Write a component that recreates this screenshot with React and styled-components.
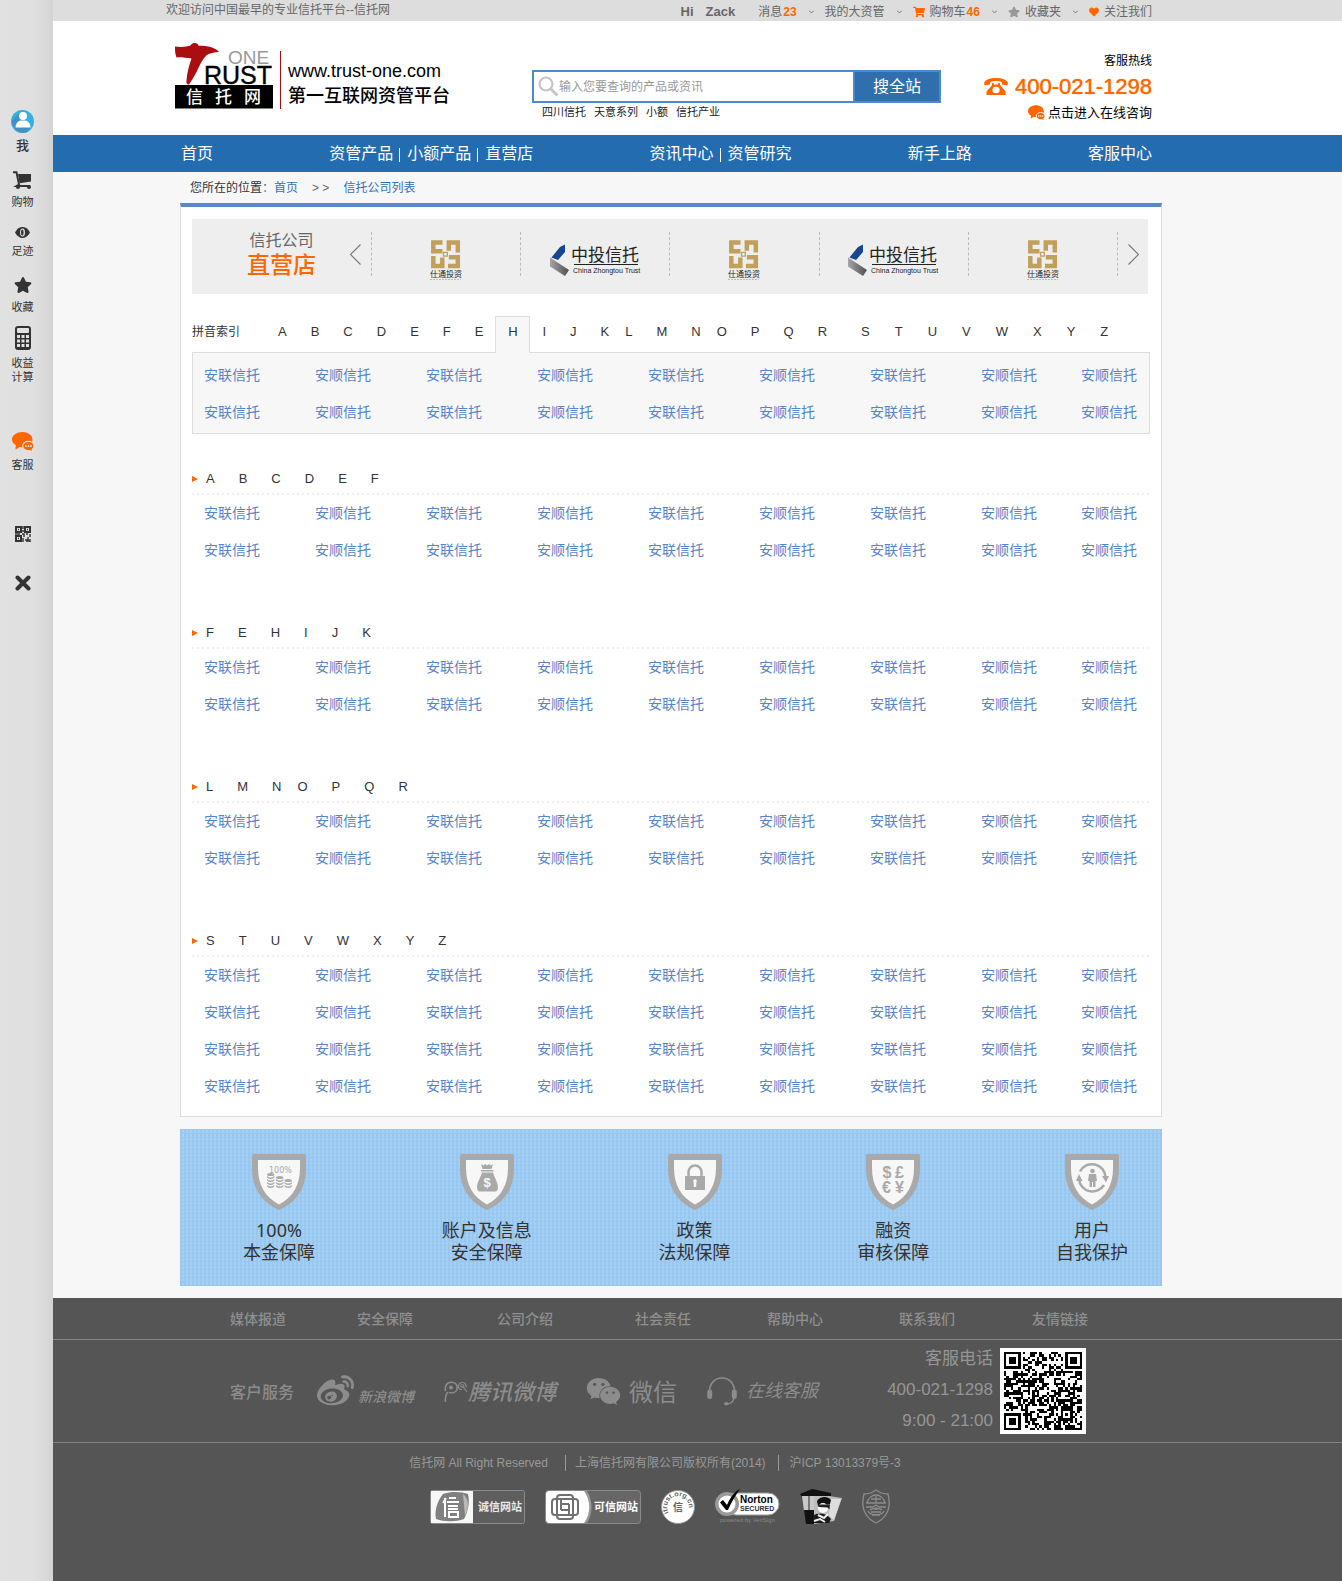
import React from "react";
import styled, { createGlobalStyle, css } from "styled-components";
import { FaShoppingCart, FaStar, FaHeart, FaWeibo, FaWeixin } from "react-icons/fa";

const SANS = `"Liberation Sans", "Noto Sans CJK SC", sans-serif`;
const ORANGE = "#ff6600";
const LINK = "#5584c8";

const GlobalStyle = createGlobalStyle`
  *, *::before, *::after { box-sizing: border-box; }
  body { margin: 0; background: #f7f7f7; color: #333; font: 12px/16px ${SANS}; }
  a { color: inherit; text-decoration: none; }
  ul, p, h1, h2 { margin: 0; padding: 0; list-style: none; font: inherit; }
  button, input { font: inherit; padding: 0; margin: 0; border: 0; background: none; color: inherit; }
  button { cursor: pointer; }
  svg { display: block; flex: none; }
`;

/* ---------- page frame ---------- */

const Shell = styled.div`
  display: flex;
  min-height: 100vh;
`;

const Main = styled.div`
  flex: 1;
  min-width: 0;
  display: flex;
  flex-direction: column;
`;

const Band = styled.div`
  padding-right: 53px;
  background: ${(p) => p.$bg || "transparent"};
`;

const Inner = styled.div`
  max-width: ${(p) => (p.$wide ? "1012px" : "982px")};
  margin: 0 auto;
`;

/* ---------- side bar ---------- */

const Side = styled.aside`
  flex: 0 0 53px;
  display: flex;
  flex-direction: column;
  align-items: center;
  padding: 110px 8px 0 0;
  background: linear-gradient(90deg, #e1e1e1 0, #e0e0e0 30px, #d9d9d9 46px, #d3d3d3 53px);
`;

const SideItem = styled.a`
  display: flex;
  flex-direction: column;
  align-items: center;
  gap: 6px;
  margin-top: ${(p) => p.$space}px;
  color: #333;
  font-size: ${(p) => (p.$strong ? 13 : 11)}px;
  font-weight: ${(p) => (p.$strong ? 500 : 400)};
  line-height: 14px;
  text-align: center;
`;

const SideButton = styled.button`
  margin-top: 33px;
`;

const SideLabel = styled.span`
  width: 24px;
`;

/* ---------- top bar ---------- */

const TopRow = styled(Inner)`
  display: flex;
  justify-content: space-between;
  align-items: center;
  height: 21px;
  padding-right: 25px;
  color: #666;
  white-space: nowrap;
`;

const Welcome = styled.span`
  padding: 0 0 2px 1px;
`;

const TopMenu = styled.nav`
  display: flex;
  align-items: center;
  gap: 11px;
  padding-top: 3px;
`;

const Greeting = styled.span`
  display: flex;
  gap: 12px;
  margin-right: 12px;
  font-size: 13px;
  font-weight: 700;
`;

const TopLink = styled.a`
  display: flex;
  align-items: center;
  gap: 5px;
  margin-right: 1px;
  &:last-child { margin-right: 0; }
  b { color: ${ORANGE}; margin-left: -4px; }
`;

/* ---------- header ---------- */

const HeaderRow = styled(Inner)`
  display: flex;
  align-items: flex-start;
  min-height: 114px;
  padding: 0 25px 0 10px;
`;

const Brand = styled.a`
  display: flex;
  flex: 0 0 275px;
  margin-top: 22px;
  color: #000;
  white-space: nowrap;
`;

const BrandText = styled.div`
  margin: 8px 0 0 7px;
  padding: 8px 0 0 7px;
  border-left: 1px solid #a30f10;
  font-size: 18px;
  line-height: 25px;
  strong { display: block; font-weight: 500; }
`;

const Search = styled.form`
  flex: 0 1 409px;
  margin: 49px 0 0 82px;
`;

const SearchBox = styled.div`
  display: flex;
  height: 33px;
  border: 2px solid #4b8bcb;
  background: #fff;
`;

const SearchField = styled.label`
  display: flex;
  flex: 1;
  align-items: center;
  padding-left: 4px;
`;

const SearchInput = styled.input`
  flex: 1;
  min-width: 0;
  height: 29px;
  font-size: 12px;
  outline: 0;
  &::placeholder { color: #999; opacity: 1; }
`;

const SearchButton = styled.button`
  width: 86px;
  border-left: 2px solid #4b8bcb;
  background: #306fae;
  color: #fff;
  font-size: 16px;
`;

const HotWords = styled.div`
  display: flex;
  gap: 8px;
  padding: 2px 0 0 10px;
  font-size: 11px;
  line-height: 14px;
  color: #222;
`;

const Contact = styled.div`
  display: flex;
  flex-direction: column;
  align-items: flex-end;
  gap: 4px;
  margin: 32px 0 0 auto;
  color: #000;
  white-space: nowrap;
`;

const Hotline = styled.a`
  display: flex;
  align-items: center;
  gap: 7px;
  color: ${ORANGE};
  font-size: 22px;
  line-height: 28px;
  text-shadow: 0 0 1px ${ORANGE};
`;

const ChatLink = styled.a`
  display: flex;
  align-items: center;
  gap: 3px;
  font-size: 13px;
`;

/* ---------- main navigation ---------- */

const NavRow = styled(Inner)`
  display: flex;
  justify-content: space-between;
  align-items: center;
  height: 37px;
  padding: 0 10px 0 1px;
  color: #fff;
  font-size: 16px;
  white-space: nowrap;
`;

const NavGroup = styled.div`
  display: flex;
  align-items: center;
`;

const NavLink = styled.a`
  & + & {
    margin-left: 6px;
  }
  & + &::before {
    content: "";
    display: inline-block;
    width: 1px;
    height: 14px;
    margin-right: 7px;
    background: #fff;
    vertical-align: -3px;
  }
`;

/* ---------- breadcrumb and panel ---------- */

const Crumbs = styled.nav`
  display: flex;
  gap: 14px;
  align-items: center;
  height: 31px;
  padding: 1px 0 0 10px;
  a { color: #2f74b5; }
`;

const CrumbMark = styled.span`
  color: #666;
`;

const Panel = styled.main`
  padding: 12px 11px 11px;
  border: 1px solid #ddd;
  border-top: 4px solid #5b87c9;
  background: #fff;
`;

const Carousel = styled.section`
  display: grid;
  grid-template-columns: 179px repeat(5, minmax(0, 1fr)) 31px;
  grid-template-rows: 44px;
  height: 75px;
  margin-right: 2px;
  padding: 13px 0 18px;
  background: #eee;
`;

const CarouselLead = styled.div`
  display: flex;
  justify-content: flex-end;
  align-items: center;
  gap: 34px;
  padding-right: 10px;
`;

const CarouselTitle = styled.h1`
  text-align: center;
  color: #666;
  font-size: 16px;
  line-height: 22px;
  strong {
    display: block;
    color: ${ORANGE};
    font-size: 23px;
    font-weight: 500;
    line-height: 26px;
  }
`;

const Slot = styled.a`
  display: flex;
  justify-content: center;
  padding-top: ${(p) => p.$top}px;
  border-left: 1px dashed #bbb;
`;

const NextCell = styled.div`
  display: flex;
  align-items: center;
  padding-left: 10px;
  border-left: 1px dashed #bbb;
`;

const IndexBar = styled.nav`
  display: flex;
  align-items: flex-start;
  margin-top: 22px;
  line-height: 32px;
  white-space: nowrap;
`;

const LetterGroup = styled.div`
  display: flex;
  gap: ${(p) => p.$gap}px;
  margin-left: ${(p) => p.$before}px;
  font-size: 13px;
`;

const ActiveLetter = styled.a`
  width: 35px;
  height: 37px;
  margin: 0 0 -1px 12px;
  border: 1px solid #ddd;
  border-bottom: 0;
  background: #f7f7f7;
  font-size: 13px;
  line-height: 30px;
  text-align: center;
`;

const IndexBox = styled.div`
  padding: 4px 0 2px;
  border: 1px solid #ddd;
  background: #f7f7f7;
`;

const Names = styled.ul`
  display: grid;
  grid-template-columns: repeat(7, minmax(0, 111fr)) minmax(0, 100fr) 56px;
  padding: 0 ${(p) => (p.$boxed ? 12 : 13)}px 0 ${(p) => (p.$boxed ? 11 : 12)}px;
  color: ${LINK};
  font-size: 14px;
  line-height: 37px;
  white-space: nowrap;
`;

const Section = styled.section`
  margin-top: ${(p) => (p.$first ? 29 : 48)}px;
`;

const SectionHead = styled.h2`
  display: flex;
  align-items: center;
  height: 32px;
  background: repeating-linear-gradient(90deg, #f0f0f0 0 2px, transparent 2px 5px) left bottom / 100% 2px no-repeat;
`;

/* ---------- guarantees ---------- */

const Guarantees = styled(Inner)`
  display: flex;
  justify-content: space-between;
  margin-top: 12px;
  margin-bottom: 12px;
  padding: 25px 34px 23px 63px;
  background-color: #a6d0f3;
  background-image: linear-gradient(90deg, #98c7ef 2px, transparent 2px),
    linear-gradient(#98c7ef 1px, transparent 1px);
  background-size: 4px 4px;
`;

const Guarantee = styled.div`
  display: flex;
  flex-direction: column;
  align-items: center;
  gap: 9px;
  font: 18px/22px "Noto Sans", "Noto Sans CJK SC", sans-serif;
  text-align: center;
`;

/* ---------- footer ---------- */

const Footer = styled.footer`
  flex: 1;
  background: #555;
  color: #999;
`;

const FooterBand = styled(Band)`
  border-bottom: 1px solid #848484;
`;

const FooterLinks = styled(Inner)`
  display: grid;
  grid-template-columns: 127fr 140fr 138fr 132fr 132fr 133fr 56px;
  height: 41px;
  padding: 0 74px 0 50px;
  color: #8f8f8f;
  font-size: 14px;
  font-weight: 500;
  line-height: 43px;
  white-space: nowrap;
`;

const ServiceRow = styled(Inner)`
  display: flex;
  align-items: center;
  height: 102px;
  padding: 0 76px 0 50px;
  color: #8c8c8c;
  white-space: nowrap;
`;

const ServiceTitle = styled.span`
  margin-right: 23px;
  padding-top: 4px;
  font-size: 16px;
  font-weight: 500;
`;

const Service = styled.a`
  display: flex;
  align-items: center;
  gap: ${(p) => p.$gap}px;
  margin-right: 30px;
  font-size: ${(p) => p.$size}px;
  line-height: 32px;
  ${(p) => p.$italic && css`font-style: italic;`}
  ${(p) => p.$strong && css`font-weight: 500;`}
`;

const LowText = styled.span`
  padding-top: ${(p) => (p.$low ? 12 : 3)}px;
`;

const ServicePhone = styled.div`
  margin: 0 7px 0 auto;
  padding-bottom: 4px;
  color: #959595;
  font-size: 17px;
  line-height: 31px;
  text-align: right;
`;

const Copyright = styled(Inner)`
  display: flex;
  justify-content: center;
  padding: 12px 32px 0 0;
  white-space: nowrap;
`;

const CopyItem = styled.span`
  & + & {
    margin-left: 17px;
    padding-left: 9px;
    border-left: 1px solid #999;
  }
  & + & + & { margin-left: 12px; padding-left: 11px; }
`;

const Badges = styled(Inner)`
  display: flex;
  justify-content: center;
  align-items: center;
  gap: 20px;
  padding: 17px 22px 0 0;
`;

/* ---------- drawings ---------- */

const Chevron = () => (
  <svg width="5" height="4" viewBox="0 0 5 4" fill="none" stroke="#777">
    <path d="M0 .5 2.500 3 5 .5" />
  </svg>
);

const ArrowIcon = ({ right }) => (
  <svg width="11" height="21" viewBox="0 0 11 21" fill="none" stroke="#777" strokeWidth="1.100">
    <path d={right ? "M.5.5 10.500 10.500.5 20.500" : "M10.500.5.5 10.500l10 10"} />
  </svg>
);

const LogoMark = () => (
  <svg width="98" height="66" viewBox="0 0 98 66">
    <path
      d="M0 3.500C6 4.500 12 3.800 15.500 2.500 16.500.5 18.500 0 20 0s3.500.8 3.500 2.800C31 2.600 40 4 44 9c-5 .3-9 1-12.500 3.300C27 16.500 25 22 22 28c-2.500 5-5 9-8 13.500-2 .5-2.800-.7-2.500-4C12 30 14 22 16.500 15.500 11 15 6 14 1.500 14.500 0 11 0 7 0 3.500Z"
      fill="#ab0e10"
    />
    <text x="53" y="21" fontSize="19" fill="#9a9a9a">ONE</text>
    <text x="29" y="41" fontSize="25" fill="#000" stroke="#000" strokeWidth=".4">RUST</text>
    <rect y="42" width="98" height="23.500" fill="#000" />
    <g fontSize="17" fontWeight="500" fill="#fff">
      <text x="11" y="60">信</text>
      <text x="40" y="60">托</text>
      <text x="69" y="60">网</text>
    </g>
  </svg>
);

const SearchIcon = () => (
  <svg width="21" height="21" viewBox="0 0 21 21" fill="none" stroke="#c6c6c6">
    <circle cx="8" cy="8" r="6.500" strokeWidth="2.200" />
    <path d="m13 13 6.500 6.500" strokeWidth="3" />
  </svg>
);

const PhoneIcon = () => (
  <svg width="24" height="18" viewBox="0 0 24 18" fill={ORANGE}>
    <path d="M12 0C6 0 1 2 .3 4.500-.2 6.500.5 7.500 2 7.300l3-.5c1-.3 1.300-1.200 1.200-2.800C9.500 2.800 14.500 2.800 17.800 4c-.1 1.600.2 2.500 1.200 2.800l3 .5c1.500.2 2.200-.8 1.700-2.800C23 2 18 0 12 0Z" />
    <path fillRule="evenodd" d="M8 5h1.800v1.500h4.400V5H16v2l5.500 6.500V17h-19v-3.500L8 7.200Zm4 3.800a3.600 3.200 0 1 0 0 6.400 3.600 3.200 0 0 0 0-6.400Z" />
  </svg>
);

const ChatIcon = ({ width, height, bg }) => (
  <svg width={width} height={height} viewBox="0 0 22 20">
    <path d="M10.500 0C16 0 20.500 3.300 20.500 7.600s-4.400 7.700-10 7.700c-1 0-1.900-.1-2.700-.3L3.400 17.500l.5-4.200C1.500 12 0 10 0 7.600 0 3.300 4.700 0 10.500 0Z" fill={ORANGE} />
    <path d="M16.300 9.300c3.300 0 5.700 2 5.700 4.700 0 1.500-.7 2.800-1.800 3.600l.6 2.400-2.900-1.400c-3.800.7-7.200-1.200-7.200-4.600 0-2.700 2.400-4.700 5.600-4.700Z" fill={ORANGE} stroke={bg} strokeWidth="1.200" />
    <path d="M13 13.300h1.600v1.600H13Zm2.600 0h1.600v1.600h-1.600Zm2.600 0h1.600v1.600h-1.600Z" fill={bg} />
  </svg>
);

const UserIcon = () => (
  <svg width="23" height="23" viewBox="0 0 23 23">
    <circle cx="11.500" cy="11.500" r="11.500" fill="#35aee2" />
    <path d="M8.500 3 1 10.500A11.500 11.500 0 0 0 16 22l3-4Z" fill="#4391c1" />
    <circle cx="12" cy="6" r="4" fill="#fff" />
    <path d="M4.500 17.500c0-4 2.500-6.500 5-7h5c2.500.5 5 3 5 7Z" fill="#fff" />
  </svg>
);

const SideCartIcon = () => (
  <svg width="19" height="18" viewBox="0 0 19 18" fill="none" stroke="#333">
    <path d="M0 1.200h3.500L6 13.500 3.500 15H17" strokeWidth="2" />
    <path d="M5 3h13v7.500L6.500 12.200Z" fill="#333" stroke="none" />
    <circle cx="5" cy="16" r="2" fill="#333" stroke="none" />
    <circle cx="16" cy="16" r="2" fill="#333" stroke="none" />
  </svg>
);

const EyeIcon = () => (
  <svg width="15" height="11" viewBox="0 0 15 11">
    <path d="M0 5.500C4-1.800 11-1.800 15 5.500 11 12.800 4 12.800 0 5.500Z" fill="#333" />
    <ellipse cx="7.500" cy="5.500" rx="2.500" ry="4" fill="#e1e1e1" />
    <ellipse cx="7.300" cy="5.500" rx="1.300" ry="3" fill="#333" />
  </svg>
);

const CalcIcon = () => (
  <svg width="16" height="24" viewBox="0 0 16 24">
    <rect width="16" height="24" rx="3" fill="#333" />
    <rect x="2" y="2" width="12" height="5" rx="1" fill="#e1e1e1" />
    {[9, 13.500, 18].map((y) => [2, 6.500, 11].map((x) => (
      <rect key={`${x}-${y}`} x={x} y={y} width="3" height="3" fill="#e1e1e1" />
    )))}
  </svg>
);

const SmallQrIcon = () => (
  <svg width="16" height="16" viewBox="0 0 16 16" fill="none" stroke="#333" strokeWidth="2">
    <path d="M1 1h5v5H1ZM10 1h5v5h-5ZM1 10h5v5H1Z" />
    <path d="M3 3.500h1M12 3.500h1M3 12.500h1M8 0v3M7 5h2M0 8h5M7 8h2v3M11 8h2M15 8v3M8 12v4M10 14h3v-3M15 13v3M11 15h4" strokeWidth="1.400" />
  </svg>
);

const CloseIcon = () => (
  <svg width="16" height="16" viewBox="0 0 16 16" stroke="#333" strokeWidth="4" strokeLinecap="round">
    <path d="m2.500 2.500 11 11m0-11-11 11" />
  </svg>
);

const GoldLogo = () => (
  <svg width="32" height="40" viewBox="0 0 32 40">
    <g fill="none" stroke="#c1a05c" strokeWidth="4.500">
      <path d="M12.500 2.500H3.300v8.700h9.200" />
      <path d="M27.800 12.500V2.500h-9v8.200" />
      <path d="M18 26h9.800v-8.800h-9" />
      <path d="M3.300 16v10h9v-8.500" />
      <path d="M13.500 12.300h3.800v3.800h-3.800Z" strokeWidth="1.300" />
    </g>
    <text x="0" y="37" fontSize="8" fill="#222">仕通投资</text>
    <path d="M0 39.500h31" stroke="#bbb" strokeDasharray="2 1" />
  </svg>
);

const ZhongtouLogo = () => (
  <svg width="91" height="34" viewBox="0 0 91 34">
    <defs>
      <linearGradient id="steel">
        <stop offset="0" stopColor="#a5a5a5" />
        <stop offset="1" stopColor="#4e4e4e" />
      </linearGradient>
    </defs>
    <path d="M1.500 13.500 10 3l5-2.500V8L8 16Z" fill="#17458e" />
    <path d="M0 13.500 19 26l-4 6L0 22.500Z" fill="url(#steel)" />
    <text x="21" y="17" fontSize="17" fill="#222">中投信托</text>
    <path d="M24 20.500h64" stroke="#222" />
    <text x="23" y="29" fontSize="7" fill="#222">China Zhongtou Trust</text>
  </svg>
);

const Shield = ({ children }) => (
  <svg width="54" height="56" viewBox="0 0 54 56">
    <path d="M1 0h52l1 1v13C54 34 45 48 27 56 9 48 0 34 0 14V1Z" fill="#a9a9a9" />
    <path d="M6 6h42v8c0 17-7 29-21 36.500C13 43 6 31 6 14Z" fill="#f7f7f7" />
    <g fill="#a9a9a9">{children}</g>
  </svg>
);

const Coins = () => {
  const stacks = [[15, 4], [24, 3], [32.500, 2]];
  return (
    <>
      <text x="17" y="19" fontSize="8" fontFamily="DejaVu Sans">100%</text>
      {stacks.map(([x, n]) => Array.from({ length: n }, (_, i) => (
        <path key={`${x}${i}`} d={`M${x} ${31 - i * 3}q3.700 3 7.400 0v1.500q-3.700 3.200-7.400 0Z`} />
      )))}
      {stacks.map(([x, n]) => <ellipse key={x} cx={x + 3.700} cy={32 - n * 3 + 0.5} rx="3.700" ry="1.600" />)}
    </>
  );
};

const MoneyBag = () => (
  <>
    <path d="m21 10 2.500 1.500L25 10l2 1.500L29 10l2 1.500L33 10l-1.500 5h-9ZM21 16h12.500v1.500H21ZM22 18.500h11c1 4 5 10 5 15 0 2-1 4-3 4H20c-2 0-3-2-3-4 0-5 4-11 5-15Z" />
    <text x="23.500" y="33" fontSize="13" fontWeight="700" fill="#f7f7f7" fontFamily="Liberation Sans">$</text>
  </>
);

const Padlock = () => (
  <>
    <path d="M20.500 24v-6a6.500 6.500 0 0 1 13 0v6" fill="none" stroke="#a9a9a9" strokeWidth="2.500" />
    <path d="M17 22h20v14H17Z" />
    <path d="M25.700 27.500h2.600V33h-2.600Z" fill="#f7f7f7" />
    <circle cx="27" cy="27" r="1.800" fill="#f7f7f7" />
  </>
);

const Currencies = () => (
  <g fontSize="16" fontWeight="700" fontFamily="Liberation Sans">
    <text x="16.500" y="24">$</text>
    <text x="29" y="24">£</text>
    <text x="16" y="39">€</text>
    <text x="29" y="39">¥</text>
  </g>
);

const PersonCycle = () => (
  <>
    <path d="M15 17.500A13.500 13.500 0 0 1 40.500 23M39 31A13.500 13.500 0 0 1 14 25" fill="none" stroke="#a9a9a9" strokeWidth="2.500" />
    <path d="M37 22h7l-3 6.500ZM11 27h6.500L14 20Z" />
    <circle cx="27.500" cy="17" r="2.300" />
    <path d="M24 20h7l1 7h-1.500v6H28v-5h-1v5h-2.500v-6H23Z" />
  </>
);

const TencentIcon = () => (
  <svg width="24" height="21" viewBox="0 0 24 21" fill="none" stroke="#8c8c8c">
    <path d="M1.500 21C1 17 1.500 14 3.500 11M1.500 10C.5 5 3 1.200 7.500 1.200c3.500 0 5.700 2.300 5.700 5.300 0 3.200-2.500 5.500-5.700 5.500-1 0-2-.3-2.700-.7" strokeWidth="1.600" />
    <circle cx="7" cy="6.500" r="2" fill="#8c8c8c" stroke="none" />
    <path d="M22 6.500c.5-3-1.200-5-3.700-5-2.200 0-3.800 1.600-3.800 3.700S16 8.700 18 8.700M18.500 5l4.500 6" strokeWidth="1.200" />
    <circle cx="18.300" cy="5" r="1.500" strokeWidth="1" />
  </svg>
);

const HeadsetIcon = () => (
  <svg width="30" height="29" viewBox="0 0 30 29" fill="none" stroke="#8c8c8c">
    <path d="M2.500 15C2.500 6 8 1 15 1s12.500 5 12.500 14" strokeWidth="1.600" />
    <path d="M2.700 15v4.500M27.300 15v4.500" strokeWidth="5" strokeLinecap="round" />
    <path d="M27 20c0 4-3 6.500-7 7" strokeWidth="1.300" />
    <path d="M18.500 26.700h1.500" strokeWidth="3" strokeLinecap="round" />
  </svg>
);

/* A 33-module code: three finders, one alignment mark, filled with seeded noise. */
const QR_SIZE = 33;
const qrPath = (() => {
  const ring = (x, y, cx, cy) => Math.max(Math.abs(x - cx), Math.abs(y - cy));
  let seed = 20141;
  let d = "";
  for (let y = 0; y < QR_SIZE; y += 1) {
    for (let x = 0; x < QR_SIZE; x += 1) {
      seed = (seed * 1103515245 + 12345) % 2147483648;
      let on = (seed >> 16) % 100 < 50;
      [[3, 3], [29, 3], [3, 29]].forEach(([cx, cy]) => {
        const r = ring(x, y, cx, cy);
        if (r <= 4) on = r < 2 || r === 3;
      });
      const a = ring(x, y, 26, 26);
      if (a <= 2) on = a !== 1;
      if (on) d += `M${x} ${y}h1v1h-1z`;
    }
  }
  return d;
})();

const QrCode = () => (
  <svg width="86" height="86" viewBox="-1.700 -1.700 36.400 36.400" role="img" aria-label="二维码" shapeRendering="crispEdges">
    <path d="M-2-2h38v38H-2Z" fill="#fff" />
    <path d={qrPath} fill="#000" />
  </svg>
);

const HonestBadge = () => (
  <svg width="95" height="34" viewBox="0 0 95 34">
    <rect x=".5" y=".5" width="94" height="33" rx="2" fill="#5e5e5e" stroke="#8a8a8a" />
    <path d="M1 1h42v32H1Z" fill="#f7f7f7" />
    <path d="M13 4C22 1 32 2 38 4c2 8 0 18-4 25-8 3-20 3-28 0C4 20 8 10 13 4Z" fill="#808080" />
    <path d="M33 4c5 4 7 12 2 22Z" fill="#b9b9b9" />
    <path d="M15 8v19M13 13l3-5M19 8h7M17 12h12M18 16h10M18 19h10M19 22h9v5h-9Z" fill="none" stroke="#fff" strokeWidth="2" />
    <text x="48" y="21" fontSize="11" fontWeight="700" fill="#e8e8e8">诚信网站</text>
  </svg>
);

const TrustedBadge = () => (
  <svg width="96" height="34" viewBox="0 0 96 34">
    <rect x=".5" y=".5" width="95" height="33" rx="3" fill="#666" stroke="#8a8a8a" />
    <path d="M38 1c7 9 7 22 0 32h4c6-10 6-22 0-32Z" fill="#999" />
    <path d="M3 1h36c7 10 7 22 0 32H3L1 31V3Z" fill="#fff" />
    <g fill="none" stroke="#707070" strokeWidth="2">
      <rect x="12" y="5" width="16" height="24" rx="3" />
      <rect x="7" y="9" width="26" height="16" rx="3" />
      <path d="M16 20V9M24 14v11M16 20h8M16 14h8" />
    </g>
    <text x="49" y="21" fontSize="11" fontWeight="700" fill="#fff">可信网站</text>
  </svg>
);

const RoundBadge = () => (
  <svg width="34" height="34" viewBox="0 0 34 34">
    <defs><path id="round" d="M9.600 25A10.900 10.900 0 1 1 24.400 25" /></defs>
    <circle cx="17" cy="17" r="16.500" fill="#fff" stroke="#999" />
    <text fontSize="7" fontWeight="700" fill="#666"><textPath href="#round" startOffset="3">itrust.org.cn</textPath></text>
    <text x="12" y="21" fontSize="10" fontWeight="700" fill="#666">信</text>
  </svg>
);

const NortonBadge = () => (
  <svg width="65" height="37" viewBox="0 0 65 37">
    <rect x="10" y="5" width="54" height="22" rx="11" fill="#fff" stroke="#999" />
    <circle cx="12" cy="16" r="10.300" fill="#fff" stroke="#999" strokeWidth="3.500" />
    <path d="M5 14.500 8 12l4 5C15 10 19 4 25 1 20 8 16 15 13 22h-2Z" fill="#000" />
    <text x="25" y="15" fontSize="10" fontWeight="700" fill="#000">Norton</text>
    <text x="25" y="23" fontSize="7" fontWeight="700" fill="#333">SECURED</text>
    <text x="5" y="34" fontSize="6" fill="#8a8a8a">powered by VeriSign</text>
  </svg>
);

const PoliceBadge = () => (
  <svg width="42" height="36" viewBox="0 0 42 36">
    <path d="M0 5 12 0l19 4v3L2 8Z" fill="#111" />
    <path d="M2 7h12v15H4Z" fill="#c9c9c9" />
    <path d="M9 7v15" stroke="#777" strokeWidth="2" />
    <path d="M4 21h11v14H6Z" fill="#111" />
    <path d="M14 7h15l13 2-8 23-20 3Z" fill="#bdbdbd" />
    <path d="M30 10l11 0-7 21-5-4Z" fill="#dedede" />
    <path d="M17 12c3-5 11-5 14-1l-1 4-12 2Z" fill="#111" />
    <circle cx="23" cy="19" r="5" fill="#f8f8f8" />
    <path d="M18 15.500h12l-.5 5-2-2-9-.5Z" fill="#222" />
    <path d="M13 27c5-4 13-3 18 3l-2 4H14Z" fill="#1c1c1c" />
    <path d="m18 26 6 3 4-4M14 32l6-2 5 3" stroke="#eee" strokeWidth="2" fill="none" />
  </svg>
);

const NetPoliceShield = () => (
  <svg width="28" height="35" viewBox="0 0 28 35" fill="none" stroke="#8c8c8c" strokeWidth="1.300">
    <path d="M14 1c4 3 8 4 12 4 3 12 0 23-12 29C2 28-1 17 2 5c4 0 8-1 12-4Z" />
    <path d="M5 14c1-5 5-8 9-8s8 3 9 8M9 10h10M14 7v7M4 14h20M4 18h7l3-2 3 2h7M8 21c2-2 10-2 12 0M9 23h10M10 26h8M14 18v3M6 22c2 5 14 5 16 0" />
  </svg>
);

/* ---------- data ---------- */

const NAV = [["首页"], ["资管产品", "小额产品", "直营店"], ["资讯中心", "资管研究"], ["新手上路"], ["客服中心"]];
const ROW = [..."联顺联顺联顺联顺顺"].map((c) => `安${c}信托`);
const SECTIONS = [
  { groups: ["ABCDEF"], rows: 2 },
  { groups: ["FEHIJK"], rows: 2 },
  { groups: ["LMN", "OPQR"], rows: 2 },
  { groups: ["STUVWXYZ"], rows: 4 },
];
const GUARANTEES = [
  [Coins, "100%", "本金保障"],
  [MoneyBag, "账户及信息", "安全保障"],
  [Padlock, "政策", "法规保障"],
  [Currencies, "融资", "审核保障"],
  [PersonCycle, "用户", "自我保护"],
];
const FOOTER_LINKS = ["媒体报道", "安全保障", "公司介绍", "社会责任", "帮助中心", "联系我们", "友情链接"];

/* ---------- composed parts ---------- */

const NameGrid = ({ rows, boxed }) => (
  <Names $boxed={boxed}>
    {Array.from({ length: rows }, (_, r) => ROW.map((name, i) => (
      <li key={`${r}-${i}`}><a href="#company">{name}</a></li>
    )))}
  </Names>
);

const Letters = ({ text, before, gap = 24 }) => (
  <LetterGroup $before={before} $gap={gap}>
    {[...text].map((l, i) => <a key={i} href={`#${l}`}>{l}</a>)}
  </LetterGroup>
);

const SideBar = () => (
  <Side>
    <SideItem href="#me" $space={0} $strong><UserIcon /><span>我</span></SideItem>
    <SideItem href="#cart" $space={18}><SideCartIcon /><SideLabel>购物</SideLabel></SideItem>
    <SideItem href="#history" $space={18}><EyeIcon /><SideLabel>足迹</SideLabel></SideItem>
    <SideItem href="#fav" $space={18}><FaStar size={18} /><SideLabel>收藏</SideLabel></SideItem>
    <SideItem href="#calc" $space={12}><CalcIcon /><SideLabel>收益计算</SideLabel></SideItem>
    <SideItem href="#service" $space={48}><ChatIcon width={22} height={20} bg="#e1e1e1" /><SideLabel>客服</SideLabel></SideItem>
    <SideItem href="#qr" aria-label="二维码" $space={54}><SmallQrIcon /></SideItem>
    <SideButton type="button" aria-label="关闭"><CloseIcon /></SideButton>
  </Side>
);

const TopBar = () => (
  <Band $bg="#ddd">
    <TopRow $wide>
      <Welcome>欢迎访问中国最早的专业信托平台--信托网</Welcome>
      <TopMenu>
        <Greeting><span>Hi</span><span>Zack</span></Greeting>
        <TopLink href="#msg">消息<b>23</b></TopLink>
        <Chevron />
        <TopLink href="#mine">我的大资管</TopLink>
        <Chevron />
        <TopLink href="#cart"><FaShoppingCart size={12} color={ORANGE} />购物车<b>46</b></TopLink>
        <Chevron />
        <TopLink href="#fav"><FaStar size={12} color="#999" />收藏夹</TopLink>
        <Chevron />
        <TopLink href="#follow"><FaHeart size={10} color={ORANGE} />关注我们</TopLink>
      </TopMenu>
    </TopRow>
  </Band>
);

const Header = () => (
  <Band $bg="#fff">
    <HeaderRow $wide>
      <Brand href="#home">
        <LogoMark />
        <BrandText>www.trust-one.com<strong>第一互联网资管平台</strong></BrandText>
      </Brand>
      <Search onSubmit={(e) => e.preventDefault()}>
        <SearchBox>
          <SearchField>
            <SearchIcon />
            <SearchInput type="text" aria-label="搜索" placeholder="输入您要查询的产品或资讯" />
          </SearchField>
          <SearchButton type="submit">搜全站</SearchButton>
        </SearchBox>
        <HotWords>
          {["四川信托", "天意系列", "小额", "信托产业"].map((w) => <a key={w} href="#hot">{w}</a>)}
        </HotWords>
      </Search>
      <Contact>
        <span>客服热线</span>
        <Hotline href="#tel"><PhoneIcon />400-021-1298</Hotline>
        <ChatLink href="#chat"><ChatIcon width={17} height={16} bg="#fff" />点击进入在线咨询</ChatLink>
      </Contact>
    </HeaderRow>
  </Band>
);

const MainNav = () => (
  <Band $bg="#236cb0">
    <NavRow as="nav">
      {NAV.map((group) => (
        <NavGroup key={group[0]}>
          {group.map((name) => <NavLink key={name} href="#nav">{name}</NavLink>)}
        </NavGroup>
      ))}
    </NavRow>
  </Band>
);

const CompanyPanel = () => (
  <Panel>
    <Carousel>
      <CarouselLead>
        <CarouselTitle>信托公司<strong>直营店</strong></CarouselTitle>
        <button type="button" aria-label="上一组"><ArrowIcon /></button>
      </CarouselLead>
      {[0, 1, 2, 3, 4].map((i) => (
        <Slot key={i} href="#shop" $top={i % 2 ? 12 : 8}>{i % 2 ? <ZhongtouLogo /> : <GoldLogo />}</Slot>
      ))}
      <NextCell><button type="button" aria-label="下一组"><ArrowIcon right /></button></NextCell>
    </Carousel>
    <IndexBar>
      <span>拼音索引</span>
      <Letters text="ABCDEFE" before={38} />
      <ActiveLetter href="#H">H</ActiveLetter>
      <Letters text="IJK" before={12} />
      <Letters text="LMN" before={16} />
      <Letters text="OPQR" before={16} />
      <Letters text="STUVWXYZ" before={34} gap={25} />
    </IndexBar>
    <IndexBox><NameGrid rows={2} boxed /></IndexBox>
    {SECTIONS.map(({ groups, rows }, n) => (
      <Section key={groups[0]} $first={n === 0}>
        <SectionHead>
          <svg width="6" height="6" viewBox="0 0 6 6"><path d="M0 0 6 3 0 6Z" fill={ORANGE} /></svg>
          {groups.map((g, i) => <Letters key={g} text={g} before={i ? 16 : 8} />)}
        </SectionHead>
        <NameGrid rows={rows} />
      </Section>
    ))}
  </Panel>
);

const PageFooter = () => (
  <Footer>
    <FooterBand>
      <FooterLinks as="nav">
        {FOOTER_LINKS.map((name) => <a key={name} href="#about">{name}</a>)}
      </FooterLinks>
    </FooterBand>
    <FooterBand>
      <ServiceRow>
        <ServiceTitle>客户服务</ServiceTitle>
        <Service href="#weibo" $gap={4} $size={14} $italic $strong><FaWeibo size={37} /><LowText $low>新浪微博</LowText></Service>
        <Service href="#tencent" $gap={0} $size={22} $italic $strong><TencentIcon /><LowText>腾讯微博</LowText></Service>
        <Service href="#weixin" $gap={8} $size={24}><FaWeixin size={35} /><LowText>微信</LowText></Service>
        <Service href="#online" $gap={9} $size={18} $italic><HeadsetIcon />在线客服</Service>
        <ServicePhone>
          <p>客服电话</p>
          <p>400-021-1298</p>
          <p>9:00 - 21:00</p>
        </ServicePhone>
        <QrCode />
      </ServiceRow>
    </FooterBand>
    <Band>
      <Copyright>
        <CopyItem>信托网 All Right Reserved</CopyItem>
        <CopyItem>上海信托网有限公司版权所有(2014)</CopyItem>
        <CopyItem>沪ICP 13013379号-3</CopyItem>
      </Copyright>
      <Badges>
        <HonestBadge />
        <TrustedBadge />
        <RoundBadge />
        <NortonBadge />
        <PoliceBadge />
        <NetPoliceShield />
      </Badges>
    </Band>
  </Footer>
);

export default function App() {
  return (
    <>
      <GlobalStyle />
      <Shell>
        <SideBar />
        <Main>
          <TopBar />
          <Header />
          <MainNav />
          <Band>
            <Inner>
              <Crumbs>
                <span>您所在的位置<a href="#home">：首页</a></span>
                <CrumbMark>&gt; &gt;</CrumbMark>
                <a href="#list">信托公司列表</a>
              </Crumbs>
              <CompanyPanel />
            </Inner>
            <Guarantees>
              {GUARANTEES.map(([Drawing, top, bottom]) => (
                <Guarantee key={top}>
                  <Shield><Drawing /></Shield>
                  <p>{top}<br />{bottom}</p>
                </Guarantee>
              ))}
            </Guarantees>
          </Band>
          <PageFooter />
        </Main>
      </Shell>
    </>
  );
}
